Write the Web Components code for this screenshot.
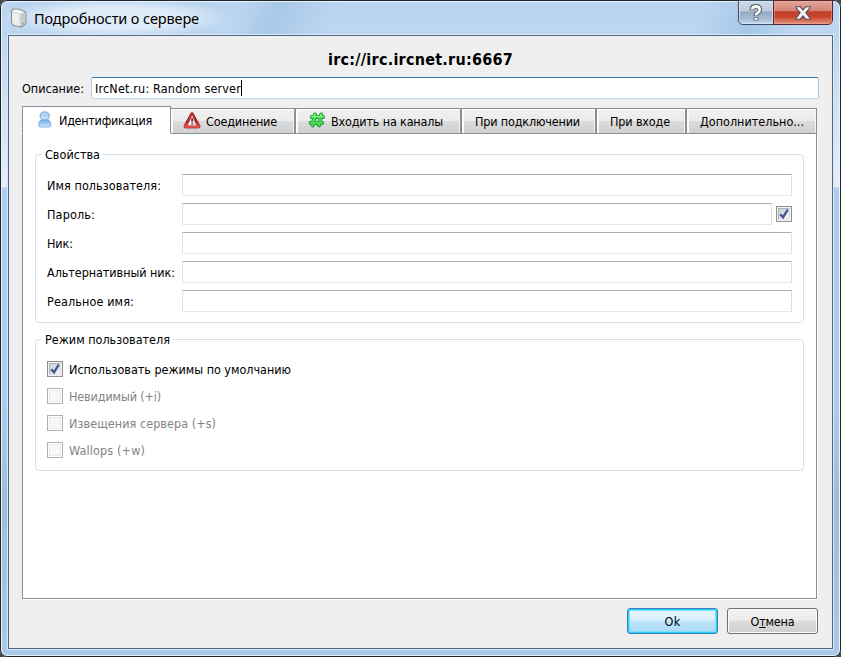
<!DOCTYPE html>
<html lang="ru"><head><meta charset="utf-8"><title>Подробности о сервере</title>
<style>
html,body{margin:0;width:841px;height:657px;overflow:hidden;background:#45474a;font:12.5px/16px "DejaVu Sans Condensed","DejaVu Sans",sans-serif;color:#000}
</style></head><body>
<server-dialog></server-dialog>
<script>
const define = (name, html, init) => customElements.define(name, class extends HTMLElement {
  constructor(){ super(); this.attachShadow({mode:'open'}).innerHTML = html; }
  connectedCallback(){ if (init) init(this, this.shadowRoot); }
});

/* Text run tracked to a given advance width (attribute w). */
define('fit-text', `<style>:host{display:block;white-space:pre;flex:none}span{display:inline-block}</style><span><slot></slot></span>`, (el, root) => {
  const w = +el.getAttribute('w'), n = el.textContent.length;
  if (!w) return;
  el.style.width = w + 'px';
  const s = root.querySelector('span');
  s.style.letterSpacing = ((w - s.getBoundingClientRect().width) / n) + 'px';
});

define('ui-icon', `<style>:host{display:block;flex:none;width:18px;height:18px}svg{display:none;width:100%;height:100%;overflow:visible}
:host([name=server]) .server,:host([name=user]) .user,:host([name=warn]) .warn,:host([name=hash]) .hash,:host([name=help]) .help,:host([name=close]) .close{display:block}</style>
<svg class="server" viewBox="0 0 18 20"><path d="M1.500 3.500Q1.800 1 4.500 1L8 1 13.500 3Q16 4 16 6.500V15.500L11.500 19 3.500 17.500Q1.500 16 1.500 13.500Z" fill="#d3d5d5" stroke="#8f9498" stroke-width="1.200"/><path d="M2.500 3Q3 1.700 5 1.700L8 1.700 14 4 10 5.500Z" fill="#fafafa"/><path d="M2.200 4L9.500 6.300V18L4 16.700Q2.200 15.500 2.200 13Z" fill="#eeeeed"/><path d="M10.300 6.800L15.300 5V15.200L11.200 18.200 10.300 18Z" fill="#c8cbcc"/><path d="M12.200 15.800h1.800" stroke="#5bbd68"/></svg>
<svg class="user" viewBox="0 0 14 17"><defs><linearGradient id="b" x2="0" y2="1"><stop stop-color="#86b6e6"/><stop offset=".4" stop-color="#c6e4fb"/><stop offset=".56" stop-color="#76ade2"/><stop offset=".75" stop-color="#9bcaf3"/><stop offset="1" stop-color="#c9e9ff"/></linearGradient></defs><path d="M3.500 8.600C.9 5.300 1.600.8 6.700.8S12.500 5.300 9.900 8.600C12.100 9.800 12.700 12 12.700 14.200 12.700 15.700 12.200 16 10.900 16H2.500C1.200 16 .7 15.700.7 14.200.7 12 1.300 9.800 3.500 8.600Z" fill="url(#b)" stroke="#6c9fd6" stroke-width=".8"/><path d="M4 3Q6.700 1 9.400 3" fill="none" stroke="#ddf0ff" stroke-width=".8"/></svg>
<svg class="warn" viewBox="0 0 18 17"><defs><linearGradient id="c" x2="0" y2="1"><stop stop-color="#c43b38"/><stop offset=".6" stop-color="#b81e22"/><stop offset="1" stop-color="#ee6258"/></linearGradient></defs><path d="M7.900 1Q9 0 10.100 1L17 13.800Q17.500 16 15.700 16H2.300Q.5 16 1 13.800Z" fill="url(#c)" stroke="#a12b2d" stroke-width=".8"/><path d="M9 3.700L13.300 13.200H4.700Z" fill="#f8f7f7"/><path d="M9 3.700L13.300 13.200H9Z" fill="#d8d7d8"/><path d="M8.200 6.300h1.700l-.3 4H8.500zM8.300 11.200h1.500v1.400H8.300z" fill="#222"/></svg>
<svg class="hash" viewBox="0 0 18 16"><g stroke-linecap="round" stroke-linejoin="round" fill="none"><path d="M7 2.500L4.700 13.300M13.200 2.500L11 13.300M3.700 5H15M2.700 10.900H14" stroke="#159329" stroke-width="4.100"/><path d="M7 2.500L4.700 13.300M13.200 2.500L11 13.300M3.700 5H15M2.700 10.900H14" stroke="#49d858" stroke-width="2.700"/><path d="M6.700 2.300L6.300 4.400M12.900 2.300L12.500 4.400M3.700 4.500H14.800" stroke="#9ff39a" stroke-width="1"/></g><path d="M7.900 6.700h3l-.5 2.600H7.300z" fill="#e6f5e3" stroke="#159329" stroke-width=".7"/></svg>
<svg class="help" viewBox="0 0 14 18"><path d="M3 6.200V5.500Q3 2.500 6.800 2.500T10.700 5.500Q10.700 7.200 9 8.500 7 9.700 7 12M7 13.500V16.500" fill="none" stroke="#545e6c" stroke-width="4.800"/><path d="M3 5.500Q3 2.500 6.800 2.500T10.700 5.500Q10.700 7.200 9 8.500 7 9.700 7 11.400M7 14.100V15.900" fill="none" stroke="#f5f5f5" stroke-width="2.800"/></svg>
<svg class="close" viewBox="0 0 16 14"><path d="M1 .8H5.300L8 3.900 10.700.8H15V1.800L10.800 6.800 15 12.200V13.200H10.700L8 9.800 5.300 13.200H1V12.200L5.200 6.800 1 1.800Z" fill="#f5f4f4" stroke="#554a58" stroke-width="1.100"/></svg>`);

define('caption-button', `<style>:host{box-sizing:border-box;display:flex;align-items:center;justify-content:center;width:36px;height:25px;border:1px solid #3e4d61;border-radius:0 0 0 5px;box-shadow:inset 0 0 0 1px #dce8f4aa;background:linear-gradient(#cbd9e8 0,#bccada 45%,#94a9bf 46%,#a8bed6 80%,#cbdcec)}
:host([kind=close]){width:60px;margin-left:-1px;border-color:#57252b;border-radius:0 0 5px 0;box-shadow:inset 0 0 0 1px #efb2a477;background:linear-gradient(#e3a79d 0,#d38171 44%,#c04029 46%,#c8432b 68%,#e5947e)}</style><slot></slot>`);

define('text-field', `<style>:host{box-sizing:border-box;display:flex;align-items:center;height:22px;flex:1;min-width:0;background:#fff;border:1px solid #e3e9ef;border-top-color:#abadb3;border-left-color:#e2e3ea;border-right-color:#dbdfe6;border-radius:1px}
:host([focused]){border-color:#3d7bad #a4c9e3 #b7d9ed #b5cfe7;border-radius:2px;padding-left:3px}i{display:none;width:1px;height:16px;background:#000}:host([focused]) i{display:block}</style><slot></slot><i></i>`);

define('check-box', `<style>:host{display:flex;align-items:center;height:16px;gap:6px}.box{box-sizing:border-box;width:16px;height:16px;border:1px solid #8e8f8f;background:#f4f4f4;padding:1px;flex:none}.in{box-sizing:border-box;width:12px;height:12px;border:1px solid #aeb3b9;border-right-color:#e0e2e5;border-bottom-color:#e0e2e5;background:linear-gradient(135deg,#cbcfd5,#f6f6f6)}svg{display:none;width:12px;height:12px;margin:-1px;overflow:visible}:host([checked]) svg{display:block}:host([disabled]){color:#838383}:host([disabled]) .box{border-color:#b1b1b1;background:#fff}:host([disabled]) .in{border-color:#e8e9ea;background:#f8f8f8}</style><div class="box"><div class="in"><svg viewBox="0 0 12 12"><path d="M2.300 6.300L5 9.300 9.800 1.600" fill="none" stroke="#415795" stroke-width="2.300"/></svg></div></div><slot></slot>`);

define('tab-item', `<style>:host{box-sizing:border-box;display:flex;align-items:center;height:26px;padding:1px 0 0 14px;border:1px solid #8b8d98;border-left:0;background:linear-gradient(#f1f1f1 0,#ebebeb 48%,#dcdcdc 50%,#d0d0d0);box-shadow:inset 2px 1px #fbfbfb,inset -1px 0 #f5f5f5}:host([joined]){border-left:1px solid #8b8d98;padding-left:13px}:host([active]){height:28px;border-left:1px solid #8b8d98;border-bottom-color:#fff;background:#fff;box-shadow:none;padding-top:1px}slot[name=icon]::slotted(*){margin-top:-3px}</style><slot name="icon"></slot><slot></slot>`, el => el.style.width = el.getAttribute('w') + 'px');

define('group-box', `<style>:host{box-sizing:border-box;display:block;border:1px solid #d5dfe5;border-radius:4px;padding:0 11px}.cap{display:flex;height:16px;margin-top:-8px;margin-left:-5px}.cap ::slotted(*){background:#fff;padding:0 3px}</style><div class="cap"><slot name="caption"></slot></div><slot></slot>`);

define('form-row', `<style>:host{display:flex;align-items:center;height:22px;margin-bottom:7px}.l{width:135px;flex:none;padding-top:1px}</style><div class="l"><slot name="label"></slot></div><slot></slot>`);

define('push-button', `<style>:host{box-sizing:border-box;display:flex;align-items:center;justify-content:center;width:91px;height:26px;padding-top:1px;border:1px solid #707070;border-radius:3px;box-shadow:inset 0 0 0 1px #fbfbfb;background:linear-gradient(#f2f2f2 0,#ebebeb 47%,#dddddd 49%,#cfcfcf)}:host([default]){border-color:#3c7fb1;box-shadow:inset 0 0 0 1px #28d2fb,inset 0 0 0 2px #7adffb;background:linear-gradient(#e9f5fc 0,#d9effb 47%,#bee5fc 49%,#a9d9f3)}</style><slot></slot>`);

define('server-dialog', `<style>
:host{box-sizing:border-box;display:grid;grid-template-rows:35px 614px;width:841px;height:657px;padding:0 8px 8px;border-radius:7px 7px 7px 7px;
 background:radial-gradient(ellipse 115px 19px at 116px 18px,#dfebf8 55%,#dfebf800) 0 0/841px 35px no-repeat,linear-gradient(115deg,transparent 0 220px,#80add555 255px,transparent 310px 640px,#82afd966 690px,transparent 730px) 0 0/841px 35px no-repeat,linear-gradient(#bbd5f1 0,#bdd7f1 35px,#dce9f6 150px,#e6eff8 187px,#aecdee 188px,#aecdee 400px,#9fbcdc 500px,#a9caea 100%);
 box-shadow:inset 0 0 0 1px #20242b,inset 0 0 0 2px #e8f3fc}
header{display:flex;align-items:flex-start}
.name{display:flex;align-items:center;height:35px;flex:1;padding-left:2px}
.name fit-text{font:14.5px/22px "Noto Sans","Open Sans",sans-serif;margin:0 0 0 6px}
main{box-sizing:border-box;display:flex;flex-direction:column;border:1px solid #536780;box-shadow:0 0 0 1px #d7e8f8;background:#efefef;padding:13px 13px 14px}
.h{align-self:center;font-weight:bold;font-size:16px;line-height:22px}
.desc{display:flex;align-items:center;margin:6px 0 7px}.desc>fit-text{margin:1px 7px 0 0}
.tabs{display:flex;align-items:flex-end;height:28px;position:relative;z-index:1;margin-bottom:-1px}
.panel{box-sizing:border-box;width:795px;height:466px;background:#fff;border:1px solid #8b8d98;box-shadow:1px 1px #fff;padding:20px 12px}
.g1{height:169px;margin-bottom:16px}.g2{height:132px}.rows{padding-top:11px}.checks{padding-top:13px;display:grid;gap:11px}
.checks fit-text{padding-top:1px}
.pw{margin-left:4px;width:16px}
footer{display:flex;justify-content:flex-end;gap:9px;margin-top:9px}
</style>
<header><div class="name"><ui-icon name="server" style="height:20px"></ui-icon><fit-text w="165">Подробности о сервере</fit-text></div><caption-button><ui-icon name="help" style="width:14px"></ui-icon></caption-button><caption-button kind="close"><ui-icon name="close" style="width:16px;height:14px"></ui-icon></caption-button></header>
<main>
<fit-text class="h" w="185">irc://irc.ircnet.ru:6667</fit-text>
<div class="desc"><fit-text w="62">Описание:</fit-text><text-field focused style="flex:0 0 728px"><fit-text w="146" style="padding-top:1px">IrcNet.ru: Random server</fit-text></text-field></div>
<div class="tabs">
<tab-item active w="149"><ui-icon slot="icon" name="user" style="width:14px;height:17px;margin-left:1px;margin-right:7px"></ui-icon><fit-text w="93">Идентификация</fit-text></tab-item>
<tab-item w="124" style="padding-left:12px"><ui-icon slot="icon" name="warn" style="height:17px;margin-right:5px"></ui-icon><fit-text w="71">Соединение</fit-text></tab-item>
<tab-item joined w="166" style="padding-left:12px"><ui-icon slot="icon" name="hash" style="height:16px;margin-right:5px"></ui-icon><fit-text w="112">Входить на каналы</fit-text></tab-item>
<tab-item joined w="135"><fit-text w="105">При подключении</fit-text></tab-item>
<tab-item joined w="90"><fit-text w="60">При входе</fit-text></tab-item>
<tab-item joined w="131"><fit-text w="104">Дополнительно...</fit-text></tab-item>
</div>
<div class="panel">
<group-box class="g1"><fit-text slot="caption" w="55">Свойства</fit-text><div class="rows">
<form-row><fit-text slot="label" w="114">Имя пользователя:</fit-text><text-field></text-field></form-row>
<form-row><fit-text slot="label" w="48">Пароль:</fit-text><text-field></text-field><check-box checked class="pw"></check-box></form-row>
<form-row><fit-text slot="label" w="26">Ник:</fit-text><text-field></text-field></form-row>
<form-row><fit-text slot="label" w="128">Альтернативный ник:</fit-text><text-field></text-field></form-row>
<form-row><fit-text slot="label" w="87">Реальное имя:</fit-text><text-field></text-field></form-row>
</div></group-box>
<group-box class="g2"><fit-text slot="caption" w="125">Режим пользователя</fit-text><div class="checks">
<check-box checked><fit-text w="222">Использовать режимы по умолчанию</fit-text></check-box>
<check-box disabled><fit-text w="92">Невидимый (+i)</fit-text></check-box>
<check-box disabled><fit-text w="147">Извещения сервера (+s)</fit-text></check-box>
<check-box disabled><fit-text w="76">Wallops (+w)</fit-text></check-box>
</div></group-box>
</div>
<footer><push-button default><fit-text w="16">Ok</fit-text></push-button><push-button style="margin-right:1px"><fit-text w="44">О<u>т</u>мена</fit-text></push-button></footer>
</main>`);
</script></body></html>
